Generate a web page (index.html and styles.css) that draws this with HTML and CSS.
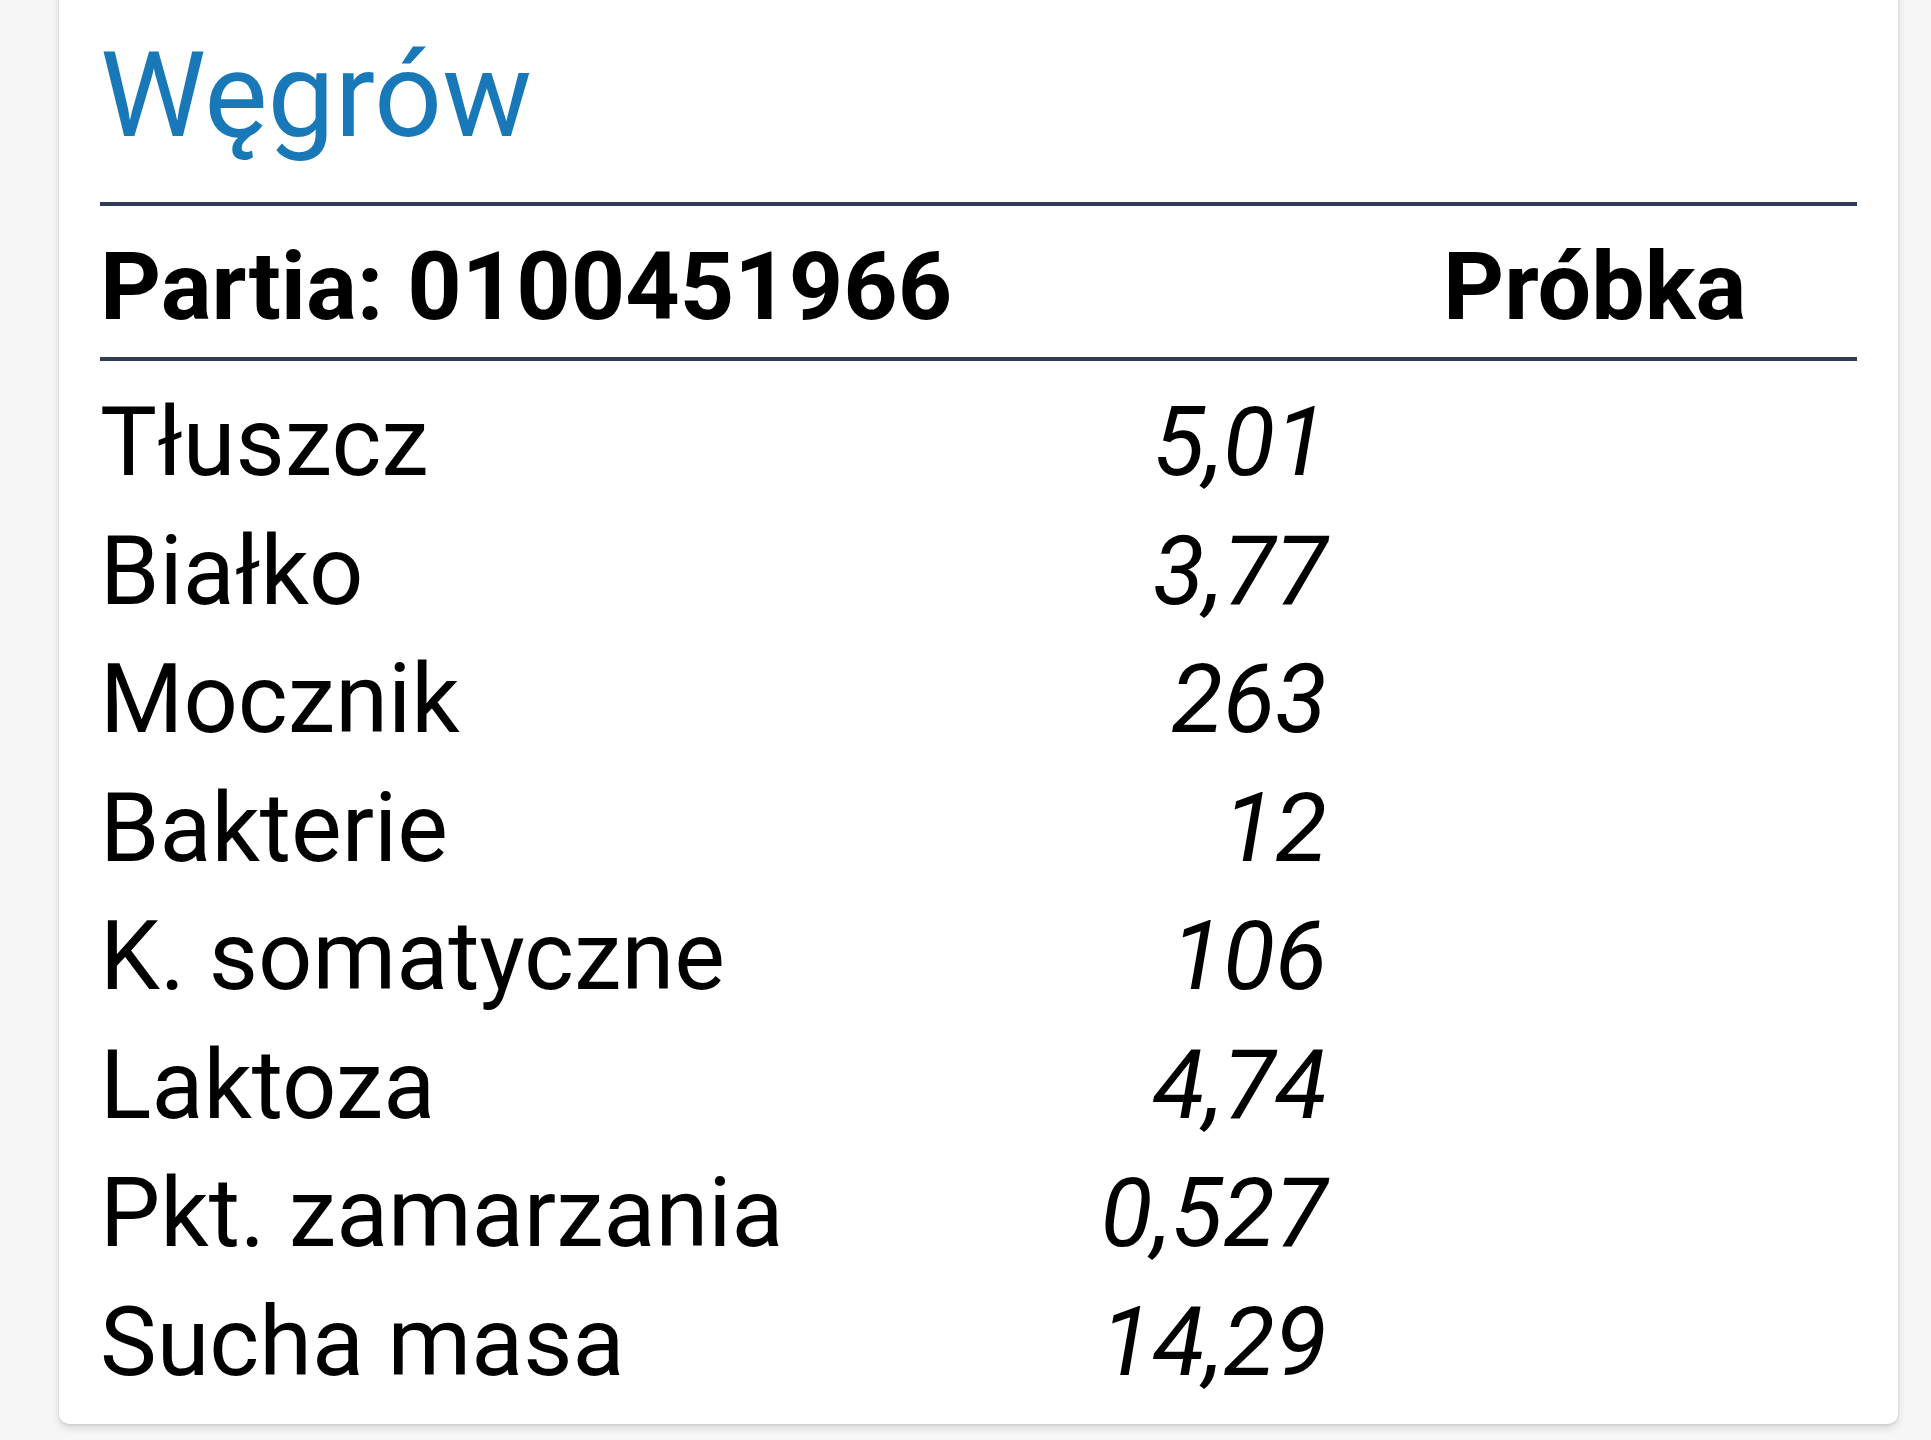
FILE: index.html
```html
<!DOCTYPE html>
<html lang="pl">
<head>
<meta charset="utf-8">
<title>Węgrów</title>
<link rel="stylesheet" href="styles.css">
</head>
<body>
<main class="card">
  <h1 class="title">Węgrów</h1>
  <div class="head-row">
    <span class="head-batch">Partia: 0100451966</span>
    <span class="head-sample">Próbka</span>
  </div>
  <div class="rows">
    <div class="row"><span class="label">Tłuszcz</span><span class="value">5,01</span></div>
    <div class="row"><span class="label">Białko</span><span class="value">3,77</span></div>
    <div class="row"><span class="label">Mocznik</span><span class="value">263</span></div>
    <div class="row"><span class="label">Bakterie</span><span class="value">12</span></div>
    <div class="row"><span class="label">K. somatyczne</span><span class="value">106</span></div>
    <div class="row"><span class="label">Laktoza</span><span class="value">4,74</span></div>
    <div class="row"><span class="label">Pkt. zamarzania</span><span class="value">0,527</span></div>
    <div class="row"><span class="label">Sucha masa</span><span class="value">14,29</span></div>
  </div>
</main>
</body>
</html>
```
FILE: styles.css
```css
html, body {
  margin: 0;
  padding: 0;
}
body {
  background: #f6f6f7;
  font-family: Roboto, "Liberation Sans", sans-serif;
  color: #000;
  width: 1931px;
  height: 1440px;
  overflow: hidden;
}
.card {
  margin: -20px 0 0 59px;
  width: 1839px;
  box-sizing: border-box;
  background: #fff;
  border-radius: 10px;
  box-shadow: 0 4px 8px rgba(0, 0, 0, 0.12), 0 1px 3px rgba(0, 0, 0, 0.10);
  padding: 45px 41px 18px 41px;
}
.title {
  margin: 0;
  font-size: 119.5px;
  font-weight: 400;
  line-height: 140px;
  color: #1878b8;
  padding-bottom: 37px;
  border-bottom: 4px solid #2e3d55;
}
.head-row {
  display: grid;
  grid-template-columns: 1305px 1fr;
  font-size: 95px;
  font-weight: 700;
  line-height: 140px;
  padding: 11px 0 0;
  border-bottom: 4px solid #2e3d55;
}
.head-sample {
  padding-left: 38px;
}
.rows {
  padding-top: 17px;
}
.row {
  display: grid;
  grid-template-columns: 1227px;
  font-size: 95.5px;
  line-height: 128.5px;
}
.row .label {
  grid-column: 1;
  grid-row: 1;
}
.row .value {
  grid-column: 1;
  grid-row: 1;
  justify-self: end;
  font-style: italic;
}
```
